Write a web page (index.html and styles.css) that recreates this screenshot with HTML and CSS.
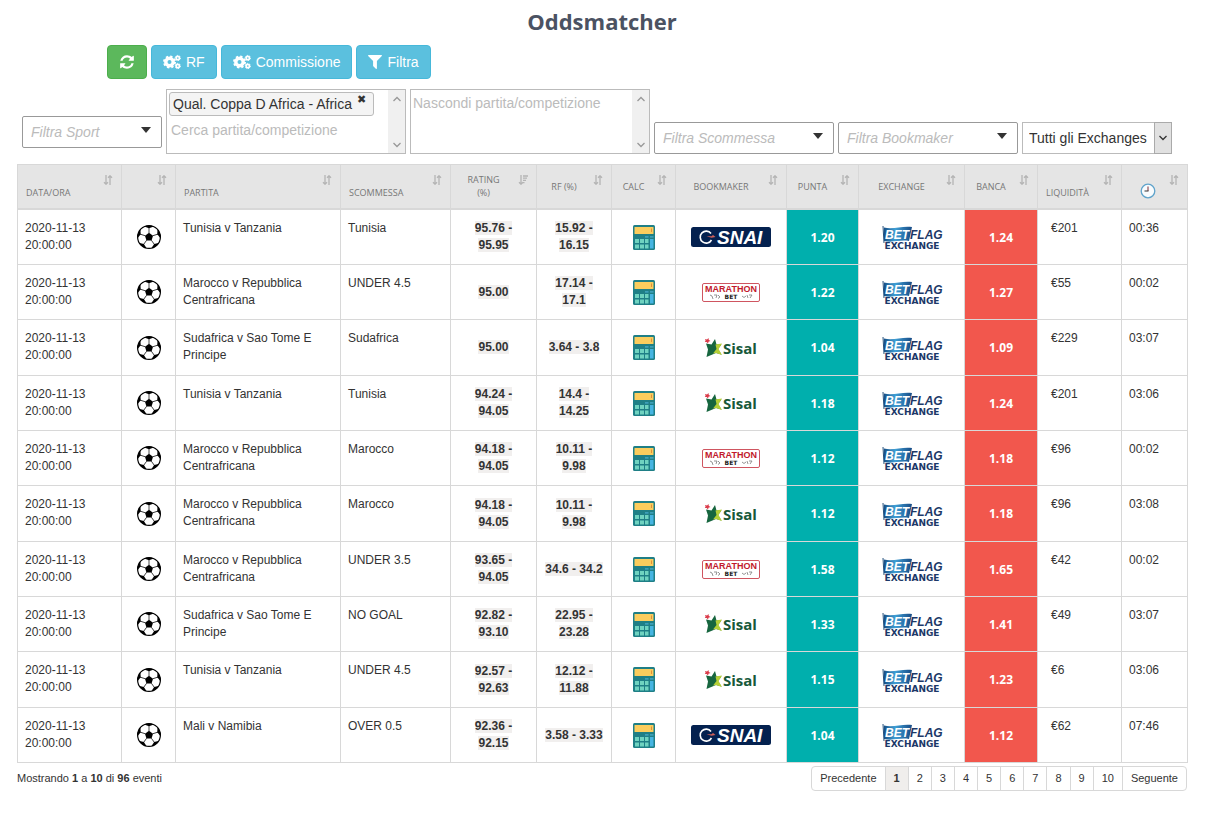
FILE: index.html
```
<!DOCTYPE html>
<html lang="it">
<head>
<meta charset="utf-8">
<title>Oddsmatcher</title>
<link rel="stylesheet" href="styles.css">
</head>
<body>
<svg class="sprite" aria-hidden="true">
  <defs>
    <symbol id="refresh" viewBox="0 0 1792 1792"><path fill="currentColor" d="M1639 1056q0 5-1 7-64 268-268 434.500t-478 166.500q-146 0-282.500-55t-243.500-157l-129 129q-19 19-45 19t-45-19-19-45v-448q0-26 19-45t45-19h448q26 0 45 19t19 45-19 45l-137 137q71 66 161 102t187 36q134 0 250-65t186-179q11-17 53-117 8-23 30-23h192q13 0 22.500 9.500t9.500 22.500zm25-800v448q0 26-19 45t-45 19h-448q-26 0-45-19t-19-45 19-45l138-138q-148-137-349-137-134 0-250 65t-186 179q-11 17-53 117-8 23-30 23h-199q-13 0-22.500-9.500t-9.500-22.500v-7q65-268 270-434.500t480-166.500q146 0 284 55.500t245 156.500l130-129q19-19 45-19t45 19 19 45z"/></symbol>
    <symbol id="filter" viewBox="192 192 1408 1536"><path fill="currentColor" d="M1595 295q17 41-14 70l-493 493v742q0 42-39 59-13 5-25 5-27 0-45-19l-256-256q-19-19-19-45v-486l-493-493q-31-29-14-70 17-39 59-39h1280q42 0 59 39z"/></symbol>
    <symbol id="cogs" viewBox="0 0 18 16">
      <g fill="none" stroke="currentColor">
        <circle cx="6.500" cy="8" r="3.700" stroke-width="3.400"/>
        <circle cx="6.500" cy="8" r="5.500" stroke-width="2" stroke-dasharray="2.300 2.020"/>
        <circle cx="14.800" cy="4" r="1.700" stroke-width="1.700"/>
        <circle cx="14.800" cy="4" r="2.600" stroke-width="1" stroke-dasharray="1.300 1.420"/>
        <circle cx="14.800" cy="12" r="1.700" stroke-width="1.700"/>
        <circle cx="14.800" cy="12" r="2.600" stroke-width="1" stroke-dasharray="1.300 1.420"/>
      </g>
    </symbol>
    <symbol id="sort" viewBox="0 0 10 10"><path fill="none" stroke="currentColor" stroke-width="1.300" d="M3 0v9M1 7.200l2 2 2-2M7 10V1M5 2.800l2-2 2 2"/></symbol>
    <symbol id="sort-desc" viewBox="0 0 10 10"><path fill="none" stroke="currentColor" stroke-width="1.300" d="M3 0v9M1 7.200l2 2 2-2M5 1h5M5 3.200h4M5 5.400h3M5 7.600h1.500"/></symbol>
    <symbol id="caret" viewBox="0 0 10 6"><path fill="#333" d="M0 0h10L5 6z"/></symbol>
    <symbol id="chev-down" viewBox="0 0 8 6"><path fill="none" stroke="currentColor" stroke-width="1.300" d="M.5 1L4 4.500 7.500 1"/></symbol>
    <symbol id="chev-up" viewBox="0 0 8 6"><path fill="none" stroke="currentColor" stroke-width="1.300" d="M.5 5L4 1.500 7.500 5"/></symbol>
    <symbol id="clock" viewBox="0 0 16 16"><circle cx="8" cy="8" r="6.800" fill="#f8fbfd" stroke="#5fa3cb" stroke-width="1.300"/><path fill="none" stroke="#7d2b35" d="M8 3.500V8"/><path fill="none" stroke="#333" d="M8.500 8H4.500"/></symbol>
    <symbol id="ball" viewBox="0 0 24 24">
      <clipPath id="ball-clip"><circle cx="12" cy="12" r="11.500"/></clipPath>
      <circle cx="12" cy="12" r="11.400" fill="#fff" stroke="#000" stroke-width="1.200"/>
      <g clip-path="url(#ball-clip)">
        <path d="M12 7.800l4 2.900-1.500 4.700h-5L8 10.700z"/>
        <g id="panel"><path d="M7.300 0h9.400l-.6 1.700L12 3.300 7.900 1.700z"/><path d="M12 8V3" stroke="#000" stroke-width=".7"/></g>
        <use href="#panel" transform="rotate(72 12 12)"/><use href="#panel" transform="rotate(144 12 12)"/><use href="#panel" transform="rotate(216 12 12)"/><use href="#panel" transform="rotate(288 12 12)"/>
      </g>
    </symbol>
    <symbol id="calc" viewBox="0 0 22 25">
      <rect width="22" height="25" rx="1.500" fill="#1f7f86"/><rect x="1.500" y="2" width="19" height="7" rx=".6" fill="#fbcd5d"/><path d="M18.500 3.500v3.500" stroke="#df8f3e"/>
      <path fill="#6fd3c0" d="M2 14h4v4H2zM7 14h4v4H7zM12 14h3.500v4H12zM2 19.500h4v4H2zM7 19.500h4v4H7zM12 19.500h3.500v4H12z"/><path fill="#3d9fb8" d="M12 11h3.500v1.700H12zM17 11h3.500v1.700H17z"/><path fill="#46b5e2" d="M17 14h3.500v9.500H17z"/>
    </symbol>
    <symbol id="snai" viewBox="0 0 80 20">
      <rect width="80" height="20" rx="2.500" fill="#04214f"/>
      <path d="M20 6.500A6 6 0 1 0 20.500 13" fill="none" stroke="#fff" stroke-width="1.600"/><path d="M15.500 9.300h5l1.500-1.300 2.500 2-4 .8z" fill="#d2615a"/>
      <text class="logo-snai" x="26" y="17">SNAI</text>
    </symbol>
    <symbol id="marathon" viewBox="0 0 58 19">
      <rect x=".5" y=".5" width="57" height="18" rx="1.500" fill="#fff" stroke="#cf5560"/>
      <text class="logo-mar" x="29" y="9">MARATHON</text><text class="logo-bet" x="29" y="16">BET</text>
      <path fill="none" stroke="#888" stroke-width=".9" d="M8 12l2 1 1 3M12 12h3l-1 3M16 12l2 2-2 1.500M40 13l2 1.500 2-1.500M45 12l1 3M47 12h3l-2 3"/>
    </symbol>
    <symbol id="sisal" viewBox="0 0 54 20">
      <path fill="#17663f" d="M2 5.500l5.500 1L11 1l1.500 5.500h5L14 11l3.500 5.500-5.500-1.500L2.500 19l1.500-7.500z"/><path fill="#b6cf37" d="M11.500 6.500l6.500-1-3.500 5.500 3.500 6-6-2-3 .5 3.500-4.500z"/><path fill="#db3b4a" d="M1 1l2 .6L4.500 0l.3 2 1.700 1-2 .8L4 5.500 2.600 4 .8 4l.8-1.300z"/>
      <text class="logo-sisal" x="19" y="16">Sisal</text>
    </symbol>
    <symbol id="betflag" viewBox="0 0 62 26">
      <linearGradient id="flag"><stop offset="0" stop-color="#174f86"/><stop offset=".4" stop-color="#3f9fd5"/><stop offset="1" stop-color="#174a85"/></linearGradient>
      <path fill="url(#flag)" d="M3 3.500c9 2.500 18-2 28-.5L28 17c-9-1.500-16 2-25 0z"/><path d="M2 2l1 17" stroke="#234f7b"/>
      <text class="logo-flag logo-flag-bet" x="4" y="15">BET</text><text class="logo-flag" x="29" y="15">FLAG</text>
      <text class="logo-ex" x="31" y="25">EXCHANGE</text>
    </symbol>
  </defs>
</svg>

<main class="page">
  <h1>Oddsmatcher</h1>
  <div class="actions">
    <button class="btn btn-green" type="button" aria-label="Aggiorna"><svg class="i16"><use href="#refresh"/></svg></button>
    <button class="btn" type="button"><svg class="cogs"><use href="#cogs"/></svg>RF</button>
    <button class="btn" type="button"><svg class="cogs"><use href="#cogs"/></svg>Commissione</button>
    <button class="btn" type="button"><svg class="funnel"><use href="#filter"/></svg>Filtra</button>
  </div>

  <form class="filters">
    <div class="combo combo-sport"><select aria-label="Filtra Sport"><option>Filtra Sport</option></select><svg class="caret"><use href="#caret"/></svg></div>
    <div class="tags">
      <div class="tags-body">
        <span class="tag">Qual. Coppa D Africa - Africa<button type="button" aria-label="Rimuovi">✖</button></span>
        <input type="text" placeholder="Cerca partita/competizione" aria-label="Cerca partita/competizione">
      </div>
      <div class="scroll"><svg class="chev"><use href="#chev-up"/></svg><svg class="chev"><use href="#chev-down"/></svg></div>
    </div>
    <div class="tags">
      <div class="tags-body"><input type="text" placeholder="Nascondi partita/competizione" aria-label="Nascondi partita/competizione"></div>
      <div class="scroll"><svg class="chev"><use href="#chev-up"/></svg><svg class="chev"><use href="#chev-down"/></svg></div>
    </div>
    <div class="combo"><select aria-label="Filtra Scommessa"><option>Filtra Scommessa</option></select><svg class="caret"><use href="#caret"/></svg></div>
    <div class="combo"><select aria-label="Filtra Bookmaker"><option>Filtra Bookmaker</option></select><svg class="caret"><use href="#caret"/></svg></div>
    <div class="exchange"><select aria-label="Exchange"><option>Tutti gli Exchanges</option></select><span class="exchange-arrow"><svg class="chev"><use href="#chev-down"/></svg></span></div>
  </form>

  <table class="odds">
    <colgroup><col class="w104"><col class="w54"><col class="w165"><col class="w110"><col class="w86"><col class="w75"><col class="w64"><col class="w111"><col class="w72"><col class="w106"><col class="w73"><col class="w84"><col class="w66"></colgroup>
    <thead>
      <tr>
        <th class="low">Data/Ora<svg class="sort"><use href="#sort"/></svg></th>
        <th><svg class="sort"><use href="#sort"/></svg></th>
        <th class="low">Partita<svg class="sort"><use href="#sort"/></svg></th>
        <th class="low">Scommessa<svg class="sort"><use href="#sort"/></svg></th>
        <th>Rating<br>(%)<svg class="sort"><use href="#sort-desc"/></svg></th>
        <th>RF (%)<svg class="sort"><use href="#sort"/></svg></th>
        <th>Calc<svg class="sort"><use href="#sort"/></svg></th>
        <th>Bookmaker<svg class="sort"><use href="#sort"/></svg></th>
        <th>Punta<svg class="sort"><use href="#sort"/></svg></th>
        <th>Exchange<svg class="sort"><use href="#sort"/></svg></th>
        <th>Banca<svg class="sort"><use href="#sort"/></svg></th>
        <th class="low">Liquidità<svg class="sort"><use href="#sort"/></svg></th>
        <th class="low time"><svg class="i16"><use href="#clock"/></svg><svg class="sort"><use href="#sort"/></svg></th>
      </tr>
    </thead>
    <tbody>
      <tr><td>2020-11-13 20:00:00</td><td class="mid"><svg class="ball"><use href="#ball"/></svg></td><td>Tunisia v Tanzania</td><td>Tunisia</td><td class="mid"><b>95.76 - 95.95</b></td><td class="mid"><b>15.92 - 16.15</b></td><td class="mid"><svg class="calc"><use href="#calc"/></svg></td><td class="mid"><svg class="snai"><use href="#snai"/></svg></td><td class="mid back">1.20</td><td class="mid"><svg class="betflag"><use href="#betflag"/></svg></td><td class="mid lay">1.24</td><td class="money">€201</td><td>00:36</td></tr>
      <tr><td>2020-11-13 20:00:00</td><td class="mid"><svg class="ball"><use href="#ball"/></svg></td><td>Marocco v Repubblica Centrafricana</td><td>UNDER 4.5</td><td class="mid"><b>95.00</b></td><td class="mid"><b>17.14 - 17.1</b></td><td class="mid"><svg class="calc"><use href="#calc"/></svg></td><td class="mid"><svg class="marathon"><use href="#marathon"/></svg></td><td class="mid back">1.22</td><td class="mid"><svg class="betflag"><use href="#betflag"/></svg></td><td class="mid lay">1.27</td><td class="money">€55</td><td>00:02</td></tr>
      <tr><td>2020-11-13 20:00:00</td><td class="mid"><svg class="ball"><use href="#ball"/></svg></td><td>Sudafrica v Sao Tome E Principe</td><td>Sudafrica</td><td class="mid"><b>95.00</b></td><td class="mid"><b>3.64 - 3.8</b></td><td class="mid"><svg class="calc"><use href="#calc"/></svg></td><td class="mid"><svg class="sisal"><use href="#sisal"/></svg></td><td class="mid back">1.04</td><td class="mid"><svg class="betflag"><use href="#betflag"/></svg></td><td class="mid lay">1.09</td><td class="money">€229</td><td>03:07</td></tr>
      <tr><td>2020-11-13 20:00:00</td><td class="mid"><svg class="ball"><use href="#ball"/></svg></td><td>Tunisia v Tanzania</td><td>Tunisia</td><td class="mid"><b>94.24 - 94.05</b></td><td class="mid"><b>14.4 - 14.25</b></td><td class="mid"><svg class="calc"><use href="#calc"/></svg></td><td class="mid"><svg class="sisal"><use href="#sisal"/></svg></td><td class="mid back">1.18</td><td class="mid"><svg class="betflag"><use href="#betflag"/></svg></td><td class="mid lay">1.24</td><td class="money">€201</td><td>03:06</td></tr>
      <tr><td>2020-11-13 20:00:00</td><td class="mid"><svg class="ball"><use href="#ball"/></svg></td><td>Marocco v Repubblica Centrafricana</td><td>Marocco</td><td class="mid"><b>94.18 - 94.05</b></td><td class="mid"><b>10.11 - 9.98</b></td><td class="mid"><svg class="calc"><use href="#calc"/></svg></td><td class="mid"><svg class="marathon"><use href="#marathon"/></svg></td><td class="mid back">1.12</td><td class="mid"><svg class="betflag"><use href="#betflag"/></svg></td><td class="mid lay">1.18</td><td class="money">€96</td><td>00:02</td></tr>
      <tr><td>2020-11-13 20:00:00</td><td class="mid"><svg class="ball"><use href="#ball"/></svg></td><td>Marocco v Repubblica Centrafricana</td><td>Marocco</td><td class="mid"><b>94.18 - 94.05</b></td><td class="mid"><b>10.11 - 9.98</b></td><td class="mid"><svg class="calc"><use href="#calc"/></svg></td><td class="mid"><svg class="sisal"><use href="#sisal"/></svg></td><td class="mid back">1.12</td><td class="mid"><svg class="betflag"><use href="#betflag"/></svg></td><td class="mid lay">1.18</td><td class="money">€96</td><td>03:08</td></tr>
      <tr><td>2020-11-13 20:00:00</td><td class="mid"><svg class="ball"><use href="#ball"/></svg></td><td>Marocco v Repubblica Centrafricana</td><td>UNDER 3.5</td><td class="mid"><b>93.65 - 94.05</b></td><td class="mid"><b>34.6 - 34.2</b></td><td class="mid"><svg class="calc"><use href="#calc"/></svg></td><td class="mid"><svg class="marathon"><use href="#marathon"/></svg></td><td class="mid back">1.58</td><td class="mid"><svg class="betflag"><use href="#betflag"/></svg></td><td class="mid lay">1.65</td><td class="money">€42</td><td>00:02</td></tr>
      <tr><td>2020-11-13 20:00:00</td><td class="mid"><svg class="ball"><use href="#ball"/></svg></td><td>Sudafrica v Sao Tome E Principe</td><td>NO GOAL</td><td class="mid"><b>92.82 - 93.10</b></td><td class="mid"><b>22.95 - 23.28</b></td><td class="mid"><svg class="calc"><use href="#calc"/></svg></td><td class="mid"><svg class="sisal"><use href="#sisal"/></svg></td><td class="mid back">1.33</td><td class="mid"><svg class="betflag"><use href="#betflag"/></svg></td><td class="mid lay">1.41</td><td class="money">€49</td><td>03:07</td></tr>
      <tr><td>2020-11-13 20:00:00</td><td class="mid"><svg class="ball"><use href="#ball"/></svg></td><td>Tunisia v Tanzania</td><td>UNDER 4.5</td><td class="mid"><b>92.57 - 92.63</b></td><td class="mid"><b>12.12 - 11.88</b></td><td class="mid"><svg class="calc"><use href="#calc"/></svg></td><td class="mid"><svg class="sisal"><use href="#sisal"/></svg></td><td class="mid back">1.15</td><td class="mid"><svg class="betflag"><use href="#betflag"/></svg></td><td class="mid lay">1.23</td><td class="money">€6</td><td>03:06</td></tr>
      <tr><td>2020-11-13 20:00:00</td><td class="mid"><svg class="ball"><use href="#ball"/></svg></td><td>Mali v Namibia</td><td>OVER 0.5</td><td class="mid"><b>92.36 - 92.15</b></td><td class="mid"><b>3.58 - 3.33</b></td><td class="mid"><svg class="calc"><use href="#calc"/></svg></td><td class="mid"><svg class="snai"><use href="#snai"/></svg></td><td class="mid back">1.04</td><td class="mid"><svg class="betflag"><use href="#betflag"/></svg></td><td class="mid lay">1.12</td><td class="money">€62</td><td>07:46</td></tr>
    </tbody>
  </table>

  <footer class="foot">
    <p>Mostrando <strong>1</strong> a <strong>10</strong> di <strong>96</strong> eventi</p>
    <nav class="pager" aria-label="Pagine">
      <a href="#">Precedente</a><a href="#" class="current" aria-current="page">1</a><a href="#">2</a><a href="#">3</a><a href="#">4</a><a href="#">5</a><a href="#">6</a><a href="#">7</a><a href="#">8</a><a href="#">9</a><a href="#">10</a><a href="#">Seguente</a>
    </nav>
  </footer>
</main>
</body>
</html>
```
FILE: styles.css
```
* { box-sizing: border-box; }
body { margin: 0; background: #fff; color: #333; font: 12px/17px "Liberation Sans", Arial, sans-serif; }
svg { display: block; flex: none; }
.sprite { position: absolute; width: 0; height: 0; }
.page { padding: 6px 39px 20px 17px; }
h1 { margin: 0 0 9px; font: bold 22px/30px "Open Sans", sans-serif; color: #4b5262; text-align: center; }
button, input, select { font-family: inherit; font-size: 14px; color: inherit; }

.actions { display: flex; gap: 4px; padding-left: 90px; }
.btn { display: flex; align-items: center; gap: 5px; height: 34px; padding: 0 11px; border: 1px solid #46b8da; border-radius: 4px; background: #5bc0de; color: #fff; }
.btn-green { border-color: #4cae4c; background: #5cb85c; }
.i16 { width: 16px; height: 16px; }
.cogs { width: 18px; height: 16px; }
.funnel { width: 14px; height: 16px; }

.filters { display: flex; align-items: flex-end; gap: 4px; margin: 10px 0; padding-left: 5px; }
.combo { position: relative; width: 180px; }
.combo-sport { width: 140px; margin-bottom: 6px; }
.combo select { display: block; width: 100%; height: 32px; padding: 0 8px; border: 1px solid #999; border-radius: 2px; background: #fff; color: #bbb; font-style: italic; appearance: none; }
.caret { position: absolute; top: 11px; right: 11px; width: 10px; height: 6px; pointer-events: none; }
.tags { display: flex; width: 240px; height: 65px; border: 1px solid #bbb; }
.tags-body { display: flex; flex: 1; flex-direction: column; align-items: flex-start; gap: 3px; padding: 2px; }
.tags input { display: block; width: 100%; height: 22px; padding: 0; border: 0; background: none; outline: 0; }
.tags input::placeholder { color: #bbb; opacity: 1; }
.tag { display: flex; align-items: flex-start; gap: 5px; height: 24px; padding: 0 7px 0 3px; border: 1px solid #bbb; border-radius: 3px; background: #f4f4f4; font-size: 14px; line-height: 22px; white-space: nowrap; }
.tag button { padding: 0; border: 0; background: none; font: 11px/14px "DejaVu Sans", sans-serif; }
.tag + input { padding-left: 2px; }
.scroll { display: flex; flex-direction: column; justify-content: space-between; align-items: center; width: 17px; padding: 6px 0 5px; background: #f0f0f0; color: #999; }
.chev { width: 8px; height: 6px; }
.exchange { position: relative; width: 150px; }
.exchange select { display: block; width: 100%; height: 32px; padding: 0 6px; border: 1px solid #bbb; border-radius: 0; background: #fff; appearance: none; }
.exchange-arrow { position: absolute; top: 0; right: 0; bottom: 0; display: flex; align-items: center; justify-content: center; width: 18px; border: 1px solid #aaa; background: #e1e1e1; pointer-events: none; }

.odds { width: 100%; table-layout: fixed; border-collapse: collapse; }
.w104 { width: 104px; } .w54 { width: 54px; } .w165 { width: 165px; } .w110 { width: 110px; } .w86 { width: 86px; } .w75 { width: 75px; } .w64 { width: 64px; } .w111 { width: 111px; } .w72 { width: 72px; } .w106 { width: 106px; } .w73 { width: 73px; } .w84 { width: 84px; } .w66 { width: 66px; }
th { position: relative; height: 44px; padding: 0 28px 0 8px; border: 1px solid #d8d8d8; border-bottom: 2px solid #d8d8d8; background: #e5e5e5; color: #777; font: 9px/13px "Open Sans", sans-serif; text-transform: uppercase; white-space: nowrap; }
th.low { padding-bottom: 9px; text-align: left; vertical-align: bottom; }
th.time { padding-left: 18px; }
.sort { position: absolute; top: 10px; right: 8px; width: 10px; height: 10px; color: #b4b4b4; }
td { height: 55px; padding: 10px 7px; border: 1px solid #d8d8d8; vertical-align: top; }
tr:nth-child(3n) td { height: 56px; }
td.mid { padding: 1px 8px 0; text-align: center; vertical-align: middle; }
td.mid svg { margin: 0 auto; }
td.money { padding-left: 13px; }
td b { background: #f1efee; }
td.back, td.lay { color: #fff; font-family: "Open Sans", sans-serif; font-weight: bold; }
td.back { background: #00afad; }
td.lay { background: #f2574d; }
.ball { width: 24px; height: 24px; }
.calc { width: 22px; height: 25px; }
.snai { width: 80px; height: 20px; }
.marathon { width: 58px; height: 19px; }
.sisal { width: 54px; height: 20px; }
.betflag { width: 62px; height: 26px; }
.logo-snai { font: italic bold 19px "Liberation Sans", sans-serif; fill: #fff; }
.logo-mar { font: bold 9px "Liberation Sans", sans-serif; fill: #c2192c; text-anchor: middle; }
.logo-bet { font: bold 6px "DejaVu Sans", sans-serif; fill: #222; text-anchor: middle; }
.logo-sisal { font: bold 15px "Open Sans", sans-serif; fill: #17593a; }
.logo-flag { font: italic bold 12px "Liberation Sans", sans-serif; fill: #1c3868; }
.logo-flag-bet { fill: #fff; }
.logo-ex { font: bold 9px "DejaVu Sans", sans-serif; fill: #1c3868; text-anchor: middle; }

.foot { display: flex; justify-content: space-between; align-items: center; margin-top: 3px; font-size: 11px; }
.foot p { margin: 0; }
.pager { display: flex; border: 1px solid #d8d8d8; border-radius: 4px; overflow: hidden; }
.pager a { padding: 3px 8px; color: #333; text-decoration: none; }
.pager a + a { border-left: 1px solid #d8d8d8; }
.pager .current { background: #f0eeec; font-weight: bold; }
```
